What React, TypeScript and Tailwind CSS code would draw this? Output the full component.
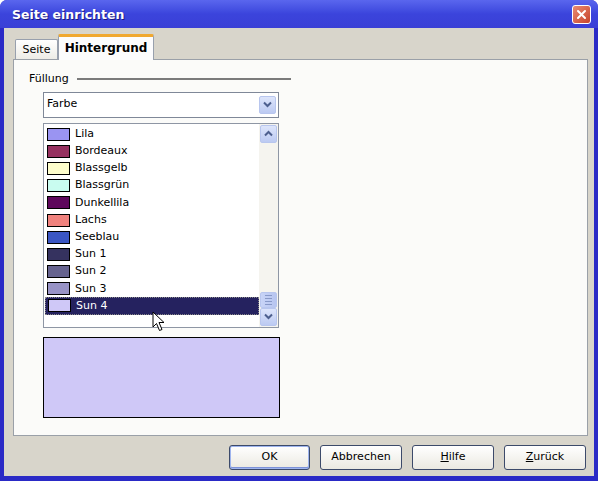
import React from "react";

const colors = [
  { name: "Lila", hex: "#9a94f2" },
  { name: "Bordeaux", hex: "#963160" },
  { name: "Blassgelb", hex: "#fdfdcb" },
  { name: "Blassgrün", hex: "#c9fcf0" },
  { name: "Dunkellila", hex: "#5e075c" },
  { name: "Lachs", hex: "#f0827e" },
  { name: "Seeblau", hex: "#3b56c4" },
  { name: "Sun 1", hex: "#35325f" },
  { name: "Sun 2", hex: "#66638f" },
  { name: "Sun 3", hex: "#9893c6" },
  { name: "Sun 4", hex: "#cfc8f7" },
];

function Chevron({ up }: { up?: boolean }) {
  return (
    <svg width="9" height="7" viewBox="0 0 9 7">
      <path
        d={up ? "M1 5.5 L4.5 2 L8 5.5" : "M1 1.5 L4.5 5 L8 1.5"}
        fill="none"
        stroke="#4d5f8e"
        strokeWidth={2}
      />
    </svg>
  );
}

function ScrollButton({ up }: { up?: boolean }) {
  return (
    <div className="flex h-[18px] w-[17px] items-center justify-center rounded-[2px] border border-[#b8c6ee] bg-gradient-to-b from-[#dde5fb] to-[#bccaf2]">
      <Chevron up={up} />
    </div>
  );
}

function XpButton({ label, underline, primary }: { label: string; underline?: number; primary?: boolean }) {
  return (
    <button
      type="button"
      className={`flex h-[25px] items-center justify-center rounded-[3px] border border-[#3c4a6a] bg-gradient-to-b from-[#ffffff] to-[#ebe9e1] text-[11px] text-black ${
        primary ? "w-[81px] shadow-[inset_0_0_0_1px_#9eb4ee,inset_0_-1px_0_1px_#7d92d8]" : "w-[82px]"
      }`}
    >
      {underline === undefined ? (
        label
      ) : (
        <span>
          <span className="underline">{label[underline]}</span>
          {label.slice(underline + 1)}
        </span>
      )}
    </button>
  );
}

export default function App() {
  return (
    <div
      className="relative flex h-[481px] w-[598px] flex-col overflow-hidden rounded-t-[7px] bg-[#2a2ac6] text-black"
      style={{ fontFamily: '"DejaVu Sans", "Liberation Sans", sans-serif' }}
    >
      {/* title bar */}
      <div className="flex h-[28px] items-center justify-between bg-gradient-to-b from-[#5a66ee] via-[#3b44dc] to-[#3a3fd6] pl-[12px] pr-[7px] pt-[3px]">
        <span className="text-[12.5px] font-bold text-white [text-shadow:1px_1px_0_#1a1a80]">Seite einrichten</span>
        <div className="mt-[-2px] flex h-[19px] w-[19px] items-center justify-center rounded-[3px] border border-white bg-gradient-to-br from-[#e98a72] to-[#c6422a]">
          <svg width="11" height="11" viewBox="0 0 11 11">
            <path d="M2 2 L9 9 M9 2 L2 9" stroke="white" strokeWidth={2} strokeLinecap="round" />
          </svg>
        </div>
      </div>

      {/* body */}
      <div className="mx-[4px] mb-[5px] flex flex-1 flex-col bg-[#d8d5cb] pl-[9px] pr-[6px] pt-[5px]">
        {/* tabs */}
        <div className="flex h-[26px] items-end pl-[2px]">
          <div className="mb-[-1px] flex h-[21px] w-[43px] items-center justify-center rounded-t-[2px] border border-b-0 border-[#98a0ad] bg-gradient-to-b from-[#ffffff] to-[#ecebe5] text-[11px]">
            Seite
          </div>
          <div className="relative z-10 mb-[-1px] flex h-[26px] w-[96px] items-center justify-center rounded-t-[2px] border-x border-[#98a0ad] border-t-[3px] border-t-[#f0a830] bg-[#fcfcfd] pb-[2px] text-[12px] font-bold">
            Hintergrund
          </div>
        </div>

        {/* panel */}
        <div className="flex h-[377px] flex-col border border-[#9aa0a8] bg-[#fbfbf9] pl-[15px]">
          <div className="mt-[11px] flex items-center gap-[8px]">
            <span className="text-[11px]">Füllung</span>
            <div className="h-[2px] w-[214px] bg-[#7b7b7b]" />
          </div>

          {/* dropdown */}
          <div className="ml-[14px] mt-[4px] flex h-[26px] w-[236px] items-center justify-between border border-[#7f8898] bg-white pl-[3px] pr-[2px]">
            <span className="text-[11px]">Farbe</span>
            <ScrollButton />
          </div>

          {/* list */}
          <div className="ml-[14px] mt-[5px] flex h-[205px] w-[236px] border border-[#8e96a4] bg-white">
            <div className="flex flex-1 flex-col pl-[1px] pt-[2px]">
              {colors.map((c, i) => {
                const selected = i === colors.length - 1;
                return (
                  <div
                    key={c.name}
                    className={`flex h-[17.2px] items-center gap-[5px] pl-[2px] text-[11px] ${
                      selected ? "border border-dotted border-[#888] bg-[#25225f] text-white" : ""
                    }`}
                  >
                    <div className="h-[13px] w-[23px] border border-black" style={{ backgroundColor: c.hex }} />
                    <span>{c.name}</span>
                  </div>
                );
              })}
            </div>
            <div className="flex w-[19px] flex-col justify-between bg-[#f5f4ef] px-[1px] py-[1px]">
              <ScrollButton up />
              <div className="flex flex-col">
                <div className="flex h-[16px] w-[17px] flex-col items-center justify-center gap-[2px] rounded-[2px] border border-[#b8c6ee] bg-gradient-to-r from-[#c8d4f7] to-[#b7c5f0]">
                  <div className="h-px w-[7px] bg-[#8899c8]" />
                  <div className="h-px w-[7px] bg-[#8899c8]" />
                  <div className="h-px w-[7px] bg-[#8899c8]" />
                  <div className="h-px w-[7px] bg-[#8899c8]" />
                </div>
                <ScrollButton />
              </div>
            </div>
          </div>

          {/* preview */}
          <div className="ml-[14px] mt-[9px] h-[81px] w-[237px] border border-black bg-[#cfc8f7]" />
        </div>

        {/* buttons */}
        <div className="mt-[9px] flex justify-end gap-[10px] pr-[2px]">
          <XpButton label="OK" primary />
          <XpButton label="Abbrechen" />
          <XpButton label="Hilfe" underline={0} />
          <XpButton label="Zurück" underline={0} />
        </div>
      </div>

      {/* mouse cursor */}
      <svg className="absolute left-[152px] top-[311px]" width="14" height="22" viewBox="0 0 14 22">
        <path
          d="M1 1 L1 16 L4.5 12.5 L7.5 19.5 L10 18.5 L7 11.5 L12 11.5 Z"
          fill="white"
          stroke="black"
          strokeWidth={1}
          strokeLinejoin="round"
        />
      </svg>
    </div>
  );
}
